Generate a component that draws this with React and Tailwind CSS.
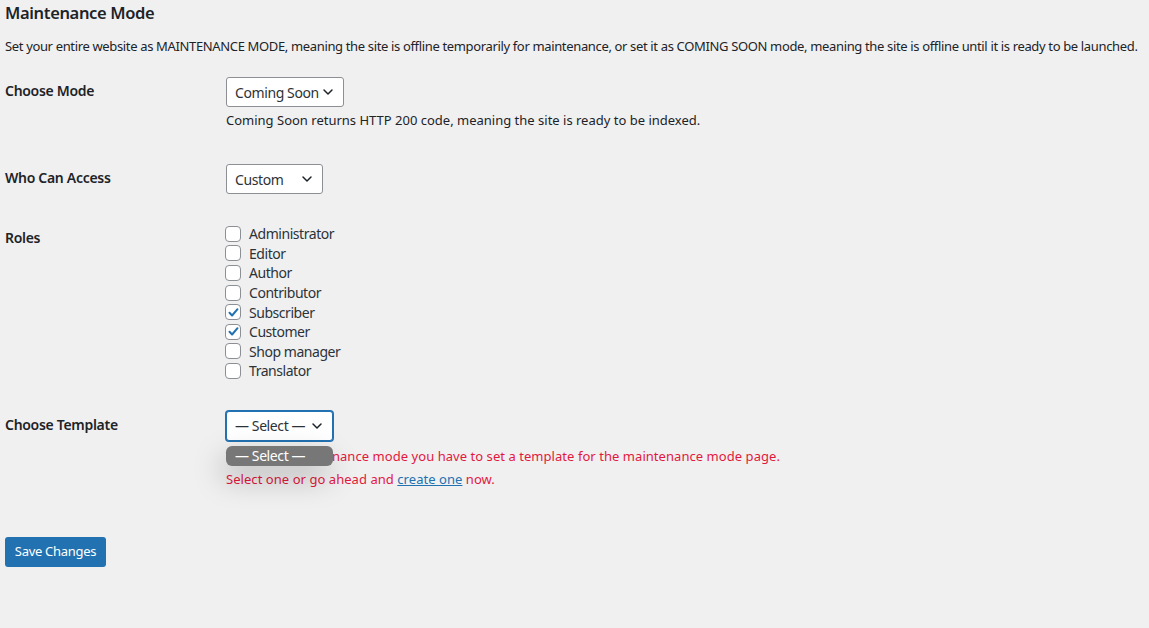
import React from 'react';

const roles = [
    { name: 'Administrator', checked: false },
    { name: 'Editor', checked: false },
    { name: 'Author', checked: false },
    { name: 'Contributor', checked: false },
    { name: 'Subscriber', checked: true },
    { name: 'Customer', checked: true },
    { name: 'Shop manager', checked: false },
    { name: 'Translator', checked: false },
];

const Chevron = () => (
    <svg width="12" height="12" viewBox="0 0 12 12" fill="none" className="shrink-0">
        <path d="M2 4l4 4 4-4" stroke="#1d2327" strokeWidth="1.5" strokeLinecap="round" strokeLinejoin="round" />
    </svg>
);

const Select = ({ label, width, focused }) => (
    <div
        className={`h-[30px] bg-white rounded-[3px] flex items-center justify-between pl-[8px] pr-[9px] text-[14px] tracking-[-0.4px] whitespace-nowrap text-[#2c3338] ${focused ? 'border border-[#2271b1] ring-1 ring-[#2271b1]' : 'border border-[#8c8f94]'}`}
        style={{ width }}
    >
        <span>{label}</span>
        <Chevron />
    </div>
);

const Checkbox = ({ checked }) => (
    <div className="w-[16px] h-[16px] rounded-[4px] border border-[#8c8f94] bg-white flex items-center justify-center shrink-0">
        {checked && (
            <svg width="13" height="13" viewBox="0 0 13 13" fill="none">
                <path d="M2.5 6.8l2.6 2.7 5.4-6.3" stroke="#2271b1" strokeWidth="2" strokeLinecap="round" strokeLinejoin="round" />
            </svg>
        )}
    </div>
);

const App = () => {
    return (
        <div className="w-[1149px] h-[628px] bg-[#f0f0f1] text-[#1d2327] overflow-hidden" style={{ fontFamily: '"Noto Sans", "Open Sans", sans-serif' }}>
            <div className="pl-[5px] pt-[1px]">
                {/* Title */}
                <h2 className="text-[16.5px] font-semibold leading-[24px] tracking-[-0.35px]">Maintenance Mode</h2>
                <p className="text-[13px] leading-[20px] mt-[11px] tracking-[-0.35px] whitespace-nowrap">
                    Set your entire website as MAINTENANCE MODE, meaning the site is offline temporarily for maintenance, or set it as COMING SOON mode, meaning the site is offline until it is ready to be launched.
                </p>

                {/* Choose Mode */}
                <div className="flex mt-[21px]">
                    <div className="w-[221px] shrink-0 pt-[4px] text-[14px] leading-[20px] font-semibold tracking-[-0.3px]">Choose Mode</div>
                    <div>
                        <Select label="Coming Soon" width={118} />
                        <p className="text-[13px] leading-[20px] mt-[3px]">Coming Soon returns HTTP 200 code, meaning the site is ready to be indexed.</p>
                    </div>
                </div>

                {/* Who Can Access */}
                <div className="flex mt-[34px]">
                    <div className="w-[221px] shrink-0 pt-[4px] text-[14px] leading-[20px] font-semibold tracking-[-0.3px]">Who Can Access</div>
                    <Select label="Custom" width={97} />
                </div>

                {/* Roles */}
                <div className="flex mt-[30px]">
                    <div className="w-[221px] shrink-0 pt-[4px] text-[14px] leading-[20px] font-semibold tracking-[-0.3px]">Roles</div>
                    <div className="flex flex-col">
                        {roles.map((r) => (
                            <label key={r.name} className="flex items-center gap-[8px] h-[19.6px] text-[14px] tracking-[-0.45px] text-[#2c3338] -ml-[1px]">
                                <Checkbox checked={r.checked} />
                                <span>{r.name}</span>
                            </label>
                        ))}
                    </div>
                </div>

                {/* Choose Template */}
                <div className="flex mt-[30px]">
                    <div className="w-[221px] shrink-0 pt-[4px] text-[14px] leading-[20px] font-semibold tracking-[-0.3px]">Choose Template</div>
                    <div className="relative">
                        <Select label="— Select —" width={107} focused />
                        <div className="text-[13px] leading-[23px] text-[#e3183d] mt-[4px] tracking-[0.05px]">
                            <p>To enable maintenance mode you have to set a template for the maintenance mode page.</p>
                            <p>
                                Select one or go ahead and <a className="text-[#2271b1] underline">create one</a> now.
                            </p>
                        </div>
                        {/* open dropdown */}
                        <div className="absolute left-0 top-[35px] w-[107px] h-[20px] rounded-[6px] bg-[#777777] text-white text-[14px] leading-[20px] pl-[9px] tracking-[-0.4px] shadow-[-4px_12px_30px_rgba(0,0,0,0.25)]">
                            — Select —
                        </div>
                    </div>
                </div>

                {/* Save */}
                <button className="mt-[46px] h-[30px] w-[101px] bg-[#2271b1] text-white text-[13px] tracking-[-0.3px] rounded-[3px]">
                    Save Changes
                </button>
            </div>
        </div>
    );
};

export default App;
